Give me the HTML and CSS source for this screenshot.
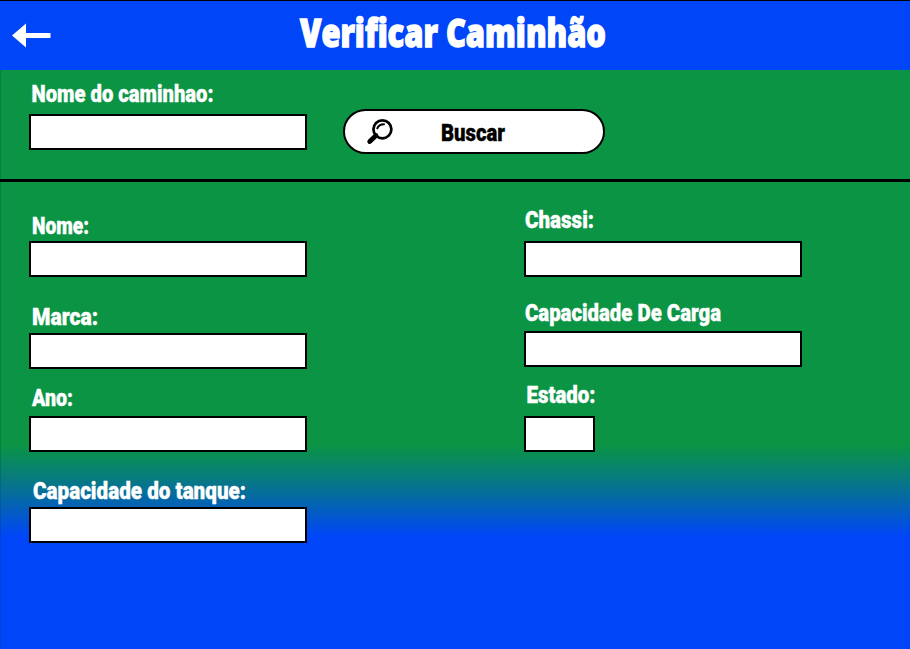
FILE: index.html
```html
<!DOCTYPE html>
<html lang="pt-BR">
<head>
<meta charset="utf-8">
<title>Verificar Caminhão</title>
<link rel="stylesheet" href="styles.css">
</head>
<body>
<header class="topbar">
  <svg class="back" viewBox="0 0 40 26"><path d="M0 12.500 14 0.500V10H38.500V15H14V24.500Z"/></svg>
  <svg class="title" viewBox="0 0 310 48"><text x="1" y="35" textLength="306" lengthAdjust="spacingAndGlyphs">Verificar Caminhão</text></svg>
</header>
<main class="content">
  <section class="search">
    <div class="field">
      <svg class="label"><text x="2.500" y="15.500" textLength="182" lengthAdjust="spacingAndGlyphs">Nome do caminhao:</text></svg>
      <input class="box">
    </div>
    <button class="buscar">
      <svg class="lens" viewBox="0 0 26 26"><circle cx="15.400" cy="10.300" r="9" /><path class="glint" d="M10.300 9.300Q11.700 5.300 17 5.200"/><path class="grip" d="M9 16.500 2.700 22.500"/></svg>
      <svg class="caption" viewBox="0 0 66 30"><text x="0" y="23.500" textLength="64" lengthAdjust="spacingAndGlyphs">Buscar</text></svg>
    </button>
  </section>
  <section class="details">
    <div class="column">
      <div class="field">
        <svg class="label"><text x="3" y="20.500" textLength="57" lengthAdjust="spacingAndGlyphs">Nome:</text></svg>
        <input class="box">
      </div>
      <div class="field marca">
        <svg class="label"><text x="3" y="19.500" textLength="66" lengthAdjust="spacingAndGlyphs">Marca:</text></svg>
        <input class="box">
      </div>
      <div class="field ano">
        <svg class="label"><text x="3" y="18" textLength="41" lengthAdjust="spacingAndGlyphs">Ano:</text></svg>
        <input class="box">
      </div>
      <div class="field tanque">
        <svg class="label"><text x="4" y="20" textLength="213" lengthAdjust="spacingAndGlyphs">Capacidade do tanque:</text></svg>
        <input class="box">
      </div>
    </div>
    <div class="column">
      <div class="field">
        <svg class="label"><text x="1" y="15" textLength="69" lengthAdjust="spacingAndGlyphs">Chassi:</text></svg>
        <input class="box">
      </div>
      <div class="field carga">
        <svg class="label"><text x="1" y="17.500" textLength="196" lengthAdjust="spacingAndGlyphs">Capacidade De Carga</text></svg>
        <input class="box">
      </div>
      <div class="field estado">
        <svg class="label"><text x="2.500" y="15" textLength="69" lengthAdjust="spacingAndGlyphs">Estado:</text></svg>
        <input class="box small">
      </div>
    </div>
  </section>
</main>
</body>
</html>
```
FILE: styles.css
```css
* { box-sizing: border-box; }
body {
  margin: 0;
  height: 649px;
  display: flex;
  flex-direction: column;
  overflow: hidden;
  font-family: Roboto, "Liberation Sans", sans-serif;
}
svg { display: block; overflow: visible; }
.topbar {
  height: 70px;
  border-top: 1px solid #000;
  background: #0046f8;
  display: flex;
  align-items: center;
  padding-left: 12px;
}
.back { width: 40px; height: 26px; fill: #fff; }
.title {
  width: 310px;
  height: 48px;
  margin-left: 247px;
  fill: #fff;
  stroke: #fff;
  stroke-width: 1.4;
  font: 900 38px "Open Sans", sans-serif;
}
.content {
  flex: 1;
  border-left: 1px solid rgba(0, 50, 60, .2);
  background: linear-gradient(#0a9444 0, #0a9444 375px, #087f76 403px, #0569a5 428px, #0046f8 466px) border-box;
}
.search {
  height: 112px;
  margin-left: -1px;
  padding: 16px 0 0 29px;
  display: flex;
  gap: 36px;
  border-bottom: 3px solid #000;
}
.label {
  width: 278px;
  height: 28px;
  fill: #fff;
  stroke: #fff;
  stroke-width: .4;
  font-weight: 900;
  font-size: 24px;
}
.box {
  display: block;
  width: 278px;
  height: 36px;
  margin: 0;
  padding: 0 8px;
  border: 2px solid #000;
  border-radius: 0;
  background: #fff;
  font-size: 20px;
}
.box.small { width: 71px; }
.buscar {
  width: 262px;
  height: 45px;
  margin-top: 23px;
  padding: 0 0 0 22px;
  display: flex;
  align-items: center;
  border: 2px solid #000;
  border-radius: 23px;
  background: #fff;
  color: #000;
  font-family: inherit;
}
.lens { width: 26px; height: 26px; margin-top: 1px; fill: none; stroke: #000; stroke-width: 2.7; stroke-linecap: round; }
.glint { stroke-width: 2; }
.grip { stroke-width: 4.8; }
.caption { width: 66px; height: 30px; margin-left: 48px; stroke: #000; stroke-width: .4; font-weight: 900; font-size: 24px; }
.details {
  padding: 31px 0 0 28px;
  display: flex;
  gap: 217px;
}
.marca { margin-top: 28px; }
.ano { margin-top: 19px; }
.tanque { margin-top: 27px; }
.carga { margin-top: 26px; }
.estado { margin-top: 21px; }
```
